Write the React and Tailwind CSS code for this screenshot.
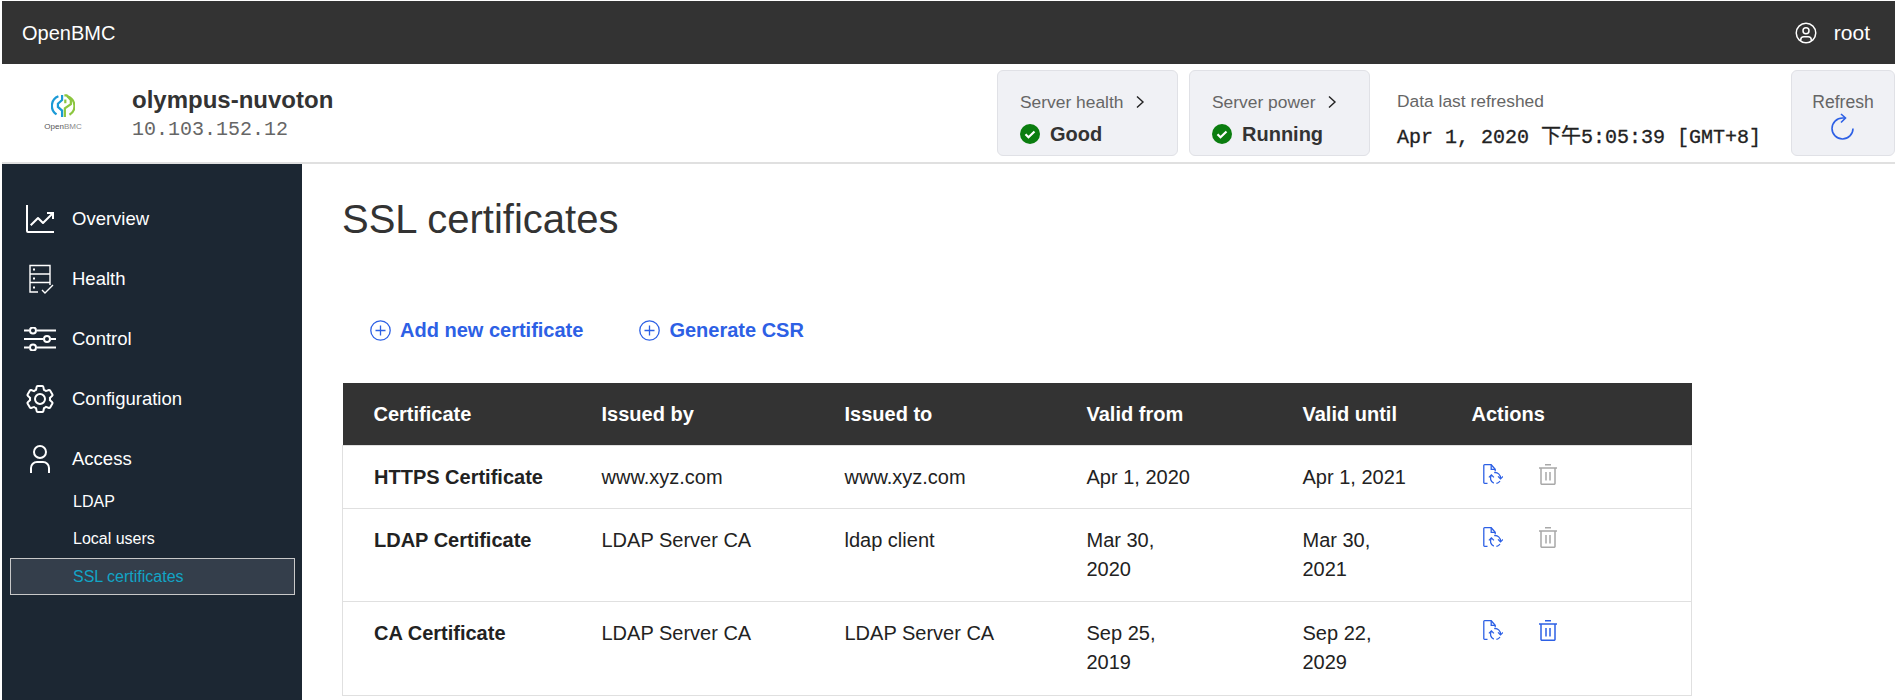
const certs = [
  { name: 'HTTPS Certificate', by: 'www.xyz.com', to: 'www.xyz.com', from: 'Apr 1, 2020', until: 'Apr 1, 2021', canDelete: false, rowHeight: 'h-[63px]' },
  { name: 'LDAP Certificate', by: 'LDAP Server CA', to: 'ldap client', from: 'Mar 30, 2020', until: 'Mar 30, 2021', canDelete: false, rowHeight: 'h-[93px]' },
  { name: 'CA Certificate', by: 'LDAP Server CA', to: 'LDAP Server CA', from: 'Sep 25, 2019', until: 'Sep 22, 2029', canDelete: true, rowHeight: 'h-[94px]' },
]

const AnalyticsIcon = () => (
  <svg viewBox="0 0 32 32" className="w-[32px] h-[32px] text-white" fill="currentColor">
    <path d="M4 2H2v26a2 2 0 0 0 2 2h26v-2H4z" />
    <path d="M30 9h-7v2h3.59L19 18.59l-4.29-4.3a1 1 0 0 0-1.42 0L6 21.59 7.41 23 14 16.41l4.29 4.3a1 1 0 0 0 1.42 0l8.29-8.3V16h2z" />
  </svg>
)

const HealthIcon = () => (
  <svg viewBox="0 0 32 32" className="w-[32px] h-[32px] text-white" fill="none" stroke="currentColor" strokeWidth="1.4">
    <path d="M14 29H6V2.5h20V22" />
    <path d="M6 11h20M6 19.5h20" />
    <path d="M9 6.5h2M9 15.5h2M9 24.5h2" strokeWidth="2" />
    <path d="M18 27l3 3 8-8" />
  </svg>
)

const SlidersIcon = () => (
  <svg viewBox="0 0 32 24" className="w-[32px] h-[24px] text-white" fill="none" stroke="currentColor" strokeWidth="2">
    <path d="M0 3.5h5M13 3.5h19M0 12h19M27 12h5M0 20.5h5M13 20.5h19" />
    <circle cx="9" cy="3.5" r="3" />
    <circle cx="23" cy="12" r="3" />
    <circle cx="9" cy="20.5" r="3" />
  </svg>
)

const GearIcon = () => (
  <svg viewBox="0 0 32 32" className="w-[32px] h-[32px] text-white" fill="currentColor">
    <path d="M27 16.76V16v-.77l1.92-1.68A2 2 0 0 0 29.3 11l-2.36-4a2 2 0 0 0-1.73-1 2 2 0 0 0-.64.1l-2.43.82a11.35 11.35 0 0 0-1.31-.75l-.51-2.52a2 2 0 0 0-2-1.61h-4.68a2 2 0 0 0-2 1.61l-.51 2.52a11.48 11.48 0 0 0-1.32.75l-2.38-.86A2 2 0 0 0 6.79 6a2 2 0 0 0-1.73 1L2.7 11a2 2 0 0 0 .41 2.51L5 15.24v1.53l-1.89 1.68A2 2 0 0 0 2.7 21l2.36 4a2 2 0 0 0 1.73 1 2 2 0 0 0 .64-.1l2.43-.82a11.35 11.35 0 0 0 1.31.75l.51 2.52a2 2 0 0 0 2 1.61h4.72a2 2 0 0 0 2-1.61l.51-2.52a11.48 11.48 0 0 0 1.32-.75l2.42.82a2 2 0 0 0 .64.1 2 2 0 0 0 1.73-1l2.28-4a2 2 0 0 0-.41-2.51zM25.21 24l-3.43-1.16a8.86 8.86 0 0 1-2.71 1.57L18.36 28h-4.72l-.71-3.55a9.36 9.36 0 0 1-2.7-1.57L6.79 24l-2.36-4 2.72-2.4a8.9 8.9 0 0 1 0-3.13L4.43 12l2.36-4 3.43 1.16a8.86 8.86 0 0 1 2.71-1.57L13.64 4h4.72l.71 3.55a9.36 9.36 0 0 1 2.7 1.57L25.21 8l2.36 4-2.72 2.4a8.9 8.9 0 0 1 0 3.13L27.57 20z" />
    <path d="M16 22a6 6 0 1 1 6-6 5.94 5.94 0 0 1-6 6zm0-10a3.91 3.91 0 0 0-4 4 3.91 3.91 0 0 0 4 4 3.91 3.91 0 0 0 4-4 3.91 3.91 0 0 0-4-4z" />
  </svg>
)

const UserIcon = () => (
  <svg viewBox="0 0 32 32" className="w-[32px] h-[32px] text-white" fill="currentColor">
    <path d="M16 4a5 5 0 1 1-5 5 5 5 0 0 1 5-5m0-2a7 7 0 1 0 7 7 7 7 0 0 0-7-7zM26 30h-2v-5a5 5 0 0 0-5-5h-6a5 5 0 0 0-5 5v5H6v-5a7 7 0 0 1 7-7h6a7 7 0 0 1 7 7z" />
  </svg>
)

const AvatarIcon = () => (
  <svg viewBox="0 0 32 32" className="w-[24px] h-[24px]" fill="currentColor">
    <path d="M16 8a5 5 0 1 0 5 5 5 5 0 0 0-5-5zm0 8a3 3 0 1 1 3-3 3.003 3.003 0 0 1-3 3z" />
    <path d="M16 2a14 14 0 1 0 14 14A14.016 14.016 0 0 0 16 2zm-6 24.377V25a3.003 3.003 0 0 1 3-3h6a3.003 3.003 0 0 1 3 3v1.377a11.899 11.899 0 0 1-12 0zm13.993-1.451A5.002 5.002 0 0 0 19 20h-6a5.002 5.002 0 0 0-4.992 4.926 12 12 0 1 1 15.985 0z" />
  </svg>
)

const CheckIcon = () => (
  <svg viewBox="0 0 20 20" className="w-[20px] h-[20px] shrink-0">
    <circle cx="10" cy="10" r="10" fill="#0a7d0f" />
    <path d="M5.5 10.2l3 3 6-5.7" fill="none" stroke="#fff" strokeWidth="2.2" />
  </svg>
)

const Chevron = () => (
  <svg viewBox="0 0 10 14" className="w-[10px] h-[14px] text-[#222]" fill="none" stroke="currentColor" strokeWidth="1.4">
    <path d="M2 1.5L8 7l-6 5.5" />
  </svg>
)

const RefreshIcon = () => (
  <svg viewBox="0 0 24 28" className="w-[24px] h-[28px] text-[#2d60e5]" fill="none" stroke="currentColor" strokeWidth="1.6">
    <path d="M22 15.5A10.5 10.5 0 1 1 11.5 5H14" />
    <path d="M10 1l4.5 4L10 9.5" />
  </svg>
)

const PlusIcon = () => (
  <svg viewBox="0 0 21 21" className="w-[21px] h-[21px] shrink-0 text-[#2d60e5]" fill="none" stroke="currentColor" strokeWidth="1.3">
    <circle cx="10.5" cy="10.5" r="9.7" />
    <path d="M10.5 5.5v10M5.5 10.5h10" />
  </svg>
)

const ReplaceIcon = () => (
  <svg viewBox="0 0 20 20" className="w-[20px] h-[20px] text-[#2d60e5]" fill="none" stroke="currentColor" strokeWidth="1.3">
    <path d="M4.5 19.3H1.6a.8.8 0 0 1-.8-.8V1.5a.8.8 0 0 1 .8-.8h6.6l4 4.6v2" />
    <path d="M8.2.7v4.6h4" />
    <path d="M8.4 11.2a5.4 5.4 0 0 0 2.4 8" />
    <path d="M5.9 13.4l2.5-2.5 2.5 2.5" />
    <path d="M11.2 8.6a5.4 5.4 0 0 1 6.3 5.6" />
    <path d="M15 12.4l2.5 2.5 2.5-2.5" />
    <path d="M17 17a5.4 5.4 0 0 1-3.6 2.4" />
  </svg>
)

const TrashIcon = ({ active }) => (
  <svg
    viewBox="0 0 18 21"
    className={active ? 'w-[18px] h-[21px] text-[#2d60e5]' : 'w-[18px] h-[21px] text-[#a8a8a8]'}
    fill="none"
    stroke="currentColor"
    strokeWidth="1.5"
  >
    <path d="M6 .8h6M0 4h18" />
    <path d="M2 4v15.5a.8.8 0 0 0 .8.8h12.4a.8.8 0 0 0 .8-.8V4" />
    <path d="M7 8v8.5M11 8v8.5" />
  </svg>
)

const Logo = () => (
  <div className="w-[40px] flex flex-col items-center">
    <svg viewBox="0 0 26 26" className="w-[24px] h-[24px]" fill="none" strokeWidth="2.4">
      <g stroke="#1b9ad6">
        <path d="M8 2.5A11 11 0 0 0 6 22" />
        <path d="M12 1v5.5L7.5 10.5v3.5L12 18v7" />
      </g>
      <g stroke="#8cc63f">
        <path d="M17.5 2.5A11 11 0 0 1 20 22.5" />
        <path d="M14.5 1.5h2.5L21.5 6.5v4.5L15 15.5v9.5" />
        <path d="M15.5 6v4" />
      </g>
    </svg>
    <span className="text-[8px] leading-[10px] mt-[4px] text-[#8a8a8a] whitespace-nowrap">
      <span className="text-[#555]">Open</span>BMC
    </span>
  </div>
)

const NavItem = ({ icon, label }) => (
  <div className="h-[60px] flex items-center">
    <div className="w-[70px] flex justify-end pr-[16px] shrink-0">{icon}</div>
    <span className="text-[18.5px] text-white">{label}</span>
  </div>
)

const StatusCard = ({ title, value }) => (
  <div className="w-[181px] h-[86px] rounded-[6px] border border-[#e0e1e6] bg-[#f0f1f5] pl-[22px] pt-[19px]">
    <div className="flex items-center gap-[12px] text-[17.4px] leading-[24px] text-[#666]">
      {title}
      <Chevron />
    </div>
    <div className="flex items-center gap-[10px] mt-[8px] text-[20px] leading-[24px] font-bold text-[#333]">
      <CheckIcon />
      {value}
    </div>
  </div>
)

const App = () => {
  return (
    <div className="h-[700px] overflow-hidden bg-white pl-[2px] pt-[1px] font-['Liberation_Sans',sans-serif] text-[#222]">
      <header className="h-[63px] bg-[#333] flex items-center justify-between pl-[20px] pr-[25px] text-white">
        <span className="text-[20px]">OpenBMC</span>
        <div className="flex items-center gap-[16px]">
          <AvatarIcon />
          <span className="text-[21px]">root</span>
        </div>
      </header>

      <div className="h-[100px] border-b-2 border-[#e0e0e0] flex items-center pb-[1px]">
        <div className="w-[130px] shrink-0 pl-[41px]">
          <Logo />
        </div>
        <div className="flex-1 pt-[5px]">
          <div className="text-[24px] leading-[28px] font-bold text-[#333]">olympus-nuvoton</div>
          <div className="text-[20px] leading-[28px] mt-[2px] text-[#666] font-['Liberation_Mono',monospace]">10.103.152.12</div>
        </div>
        <div className="flex gap-[11px]">
          <StatusCard title="Server health" value="Good" />
          <StatusCard title="Server power" value="Running" />
        </div>
        <div className="w-[421px] pl-[27px] pt-[16px] shrink-0">
          <div className="text-[17.4px] leading-[24px] text-[#666]">Data last refreshed</div>
          <div className="text-[20px] leading-[28px] mt-[11px] text-[#222] [-webkit-text-stroke:0.3px] whitespace-nowrap font-['Liberation_Mono','Noto_Sans_CJK_SC',monospace]">
            Apr 1, 2020 下午5:05:39 [GMT+8]
          </div>
        </div>
        <div className="w-[104px] h-[86px] shrink-0 rounded-[6px] border border-[#e0e1e6] bg-[#f0f1f5] flex flex-col items-center pt-[20px]">
          <span className="text-[17.6px] leading-[22px] text-[#666]">Refresh</span>
          <RefreshIcon />
        </div>
      </div>

      <div className="flex h-[536px]">
        <nav className="w-[300px] shrink-0 bg-[#1c2733] pt-[25px]">
          <NavItem icon={<AnalyticsIcon />} label="Overview" />
          <NavItem icon={<HealthIcon />} label="Health" />
          <NavItem icon={<SlidersIcon />} label="Control" />
          <NavItem icon={<GearIcon />} label="Configuration" />
          <NavItem icon={<UserIcon />} label="Access" />
          <div className="-mt-[6px] text-[16px] text-white">
            <div className="h-[37.5px] flex items-center pl-[71px]">LDAP</div>
            <div className="h-[37.5px] flex items-center pl-[71px]">Local users</div>
            <div className="h-[37px] ml-[8px] w-[285px] flex items-center pl-[62px] border border-[#c8c8c8] bg-[#343e4b] text-[#12a5c6]">
              SSL certificates
            </div>
          </div>
        </nav>

        <main className="flex-1 pl-[40px] pt-[31px]">
          <h1 className="text-[40px] leading-[48px] text-[#333]">SSL certificates</h1>

          <div className="flex items-center mt-[75px] pl-[28px] h-[24px] text-[20px] font-bold text-[#2d60e5]">
            <PlusIcon />
            <span className="ml-[9px]">Add new certificate</span>
            <div className="ml-[56px]"><PlusIcon /></div>
            <span className="ml-[9px]">Generate CSR</span>
          </div>

          <table className="mt-[41px] w-[1350px] table-fixed border-collapse text-[20px] leading-[29px] text-[#222]">
            <colgroup>
              <col className="w-[229px]" />
              <col className="w-[243px]" />
              <col className="w-[242px]" />
              <col className="w-[216px]" />
              <col className="w-[169px]" />
              <col />
            </colgroup>
            <thead>
              <tr className="h-[62px] bg-[#333] text-white text-left">
                <th className="pl-[31px] pt-[1px] font-bold">Certificate</th>
                <th className="pl-[30px] pt-[1px] font-bold">Issued by</th>
                <th className="pl-[30px] pt-[1px] font-bold">Issued to</th>
                <th className="pl-[30px] pt-[1px] font-bold">Valid from</th>
                <th className="pl-[30px] pt-[1px] font-bold">Valid until</th>
                <th className="pl-[30px] pt-[1px] font-bold">Actions</th>
              </tr>
            </thead>
            <tbody>
              {certs.map((cert) => (
                <tr key={cert.name} className={`border border-[#e0e0e0] align-top ${cert.rowHeight}`}>
                  <td className="pl-[31px] pt-[17px] pb-[16px] font-bold">{cert.name}</td>
                  <td className="pl-[30px] pt-[17px] pb-[16px]">{cert.by}</td>
                  <td className="pl-[30px] pt-[17px] pb-[16px]">{cert.to}</td>
                  <td className="pl-[30px] pt-[17px] pb-[16px]"><div className="max-w-[110px]">{cert.from}</div></td>
                  <td className="pl-[30px] pt-[17px] pb-[16px]"><div className="max-w-[110px]">{cert.until}</div></td>
                  <td className="pl-[30px] pt-[17px] pb-[16px]">
                    <div className="flex items-center gap-[36px] pl-[11px] pt-[1px]">
                      <ReplaceIcon />
                      <TrashIcon active={cert.canDelete} />
                    </div>
                  </td>
                </tr>
              ))}
            </tbody>
          </table>
        </main>
      </div>
    </div>
  )
}

export default App
